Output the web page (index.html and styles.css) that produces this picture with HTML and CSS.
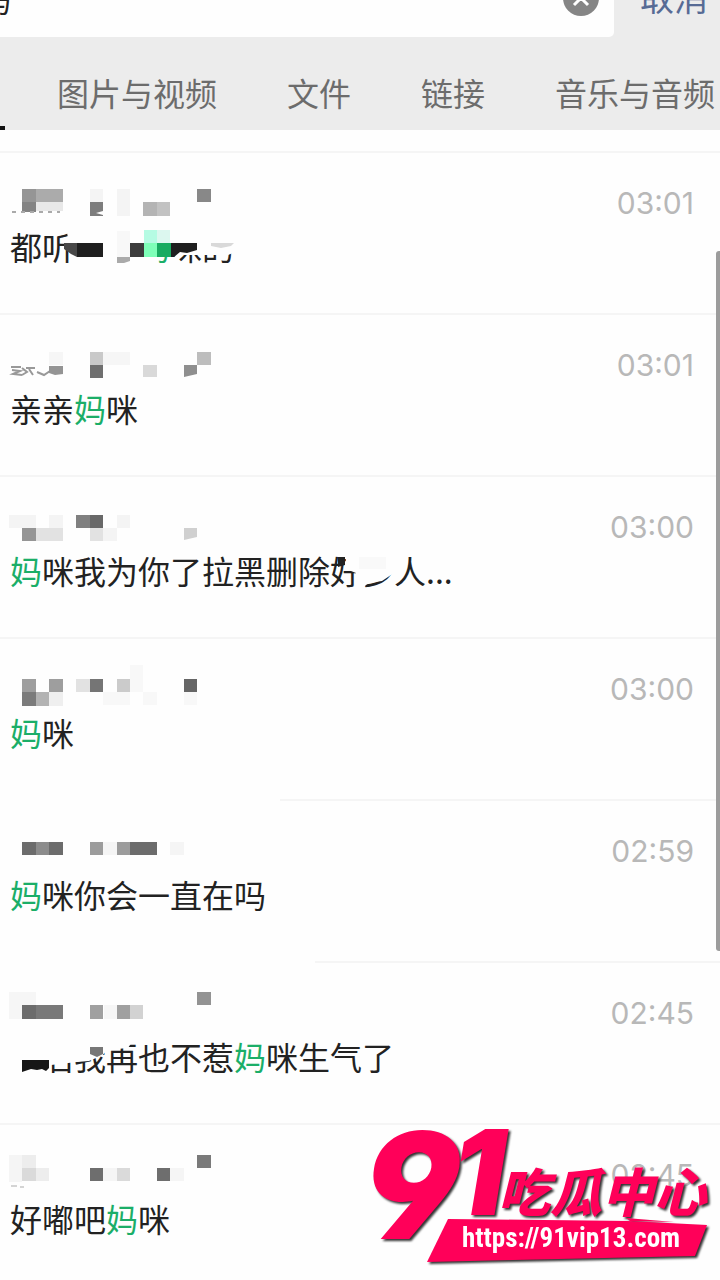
FILE: index.html
```html
<!DOCTYPE html>
<html lang="zh-CN">
  <head>
    <meta charset="utf-8" />
    <title>搜索聊天记录</title>
    <meta name="viewport" content="width=device-width, initial-scale=1" />
    <link rel="stylesheet" href="styles.css">
  </head>
  <body>
    <header class="header">
      <form class="search">
        <div class="search-box">
          <input class="search-input" type="text" value="妈" aria-label="搜索" />
          <button class="clear" type="reset" aria-label="清除">
            <svg width="36" height="36" viewBox="0 0 36 36">
              <circle cx="18" cy="18" r="18" fill="#858585" />
              <path d="M11 11l14 14M25 11L11 25" stroke="#fff" stroke-width="3" />
            </svg>
          </button>
        </div>
        <button class="cancel" type="button">取消</button>
      </form>
      <nav class="tabs">
        <a class="tab" href="#">图片与视频</a>
        <a class="tab" href="#">文件</a>
        <a class="tab" href="#">链接</a>
        <a class="tab" href="#">音乐与音频</a>
      </nav>
    </header>

    <main class="results">
      <ul class="list">
        <li class="item">
          <time class="time">03:01</time>
          <p class="message">都听<span class="hidden-text"></span><mark>妈</mark>咪的</p>
          <svg class="mosaic" width="480" height="130">
            <path fill="#fefefe" d="M66 76h172v24l-10 4h-28l-8 0h-26l-6-1h-8v10h-70v-15h-12z" />
            <path fill="#959595" d="M22 38h14v13h-14z" />
            <path fill="#ababab" d="M36 38h27v13h-27z" />
            <path fill="#838383" d="M22 51h14v10h-14z" />
            <path fill="#e8e8e8" d="M36 51h27v9h-27z" />
            <path fill="none" stroke="#aaa" stroke-width="2" stroke-dasharray="4 5" d="M12 61h48" />
            <path fill="#f4f4f4" d="M90 38h13v13h-13zM117 38h13v27h-13z" />
            <path fill="#7d7d7d" d="M90 51h13v9l-7 2 7 2v1h-13z" />
            <path fill="#b4b4b4" d="M143 51h14v14h-14z" />
            <path fill="#c2c2c2" d="M157 51h13v14h-13z" />
            <path fill="#888" d="M197 38h14v13h-14z" />
            <path fill="#484848" d="M64 92h13v14l-6-3-7-5z" />
            <path fill="#1f1f1f" d="M77 92h26v14h-26zM170 92h27v7l-10 3-7-1-6 5h-4z" />
            <path fill="#f8f8f8" d="M117 80h13v26h-13z" />
            <path fill="#aaa" d="M117 106h13v4l-6 2h-7z" />
            <path fill="#3c3c3c" d="M130 92h14v14h-14z" />
            <path fill="#b5fbe3" d="M144 79h13v13h-13z" />
            <path fill="#dcf7ef" d="M157 79h13v13h-13z" />
            <path fill="#7effb8" d="M144 92h13v14h-13z" />
            <path fill="#17ab60" d="M157 92h14v14h-14z" />
            <path fill="#d9d9d9" d="M211 92h23l-3 3-10 2-10-2z" />
          </svg>
        </li>
        <li class="item">
          <time class="time">03:01</time>
          <p class="message">亲亲<mark>妈</mark>咪</p>
          <svg class="mosaic" width="480" height="130">
            <path fill="none" stroke="#999" stroke-width="2" d="M11 54h10M12 57l8 1-7 3 9 1M22 55l5 4-5 3M26 55h9M29 56l4 6M37 59l7 3 6-4" />
            <path fill="#f6f6f6" d="M49 39h14v13h-14zM103 39h27v13h-27z" />
            <path fill="#949494" d="M49 53h14v8l-8 1-6-2z" />
            <path fill="#c9c9c9" d="M90 39h13v13h-13z" />
            <path fill="#6f6f6f" d="M90 52h13v13h-13z" />
            <path fill="#d9d9d9" d="M143 52h14v12h-14z" />
            <path fill="#8f8f8f" d="M184 52h13v9l-13 3z" />
            <path fill="#bdbdbd" d="M197 39h14v13h-14z" />
          </svg>
        </li>
        <li class="item">
          <time class="time">03:00</time>
          <p class="message"><mark>妈</mark>咪我为你了拉黑删除好多人...</p>
          <svg class="mosaic" width="480" height="130">
            <path fill="#fefefe" d="M346 78h48v20l-12 8-14 2-4 4h-9l1-14-10-4z" />
            <path fill="#222" d="M338 82h7v8l-7 2z" />
            <path fill="#f4f4f4" d="M9 40h27v13h-27zM49 40h14v13h-14zM103 53h14v13h-14zM117 40h13v13h-13z" />
            <path fill="#f9f9f9" d="M359 82h27v12h-27z" />
            <path fill="#959595" d="M22 53h14v13h-14z" />
            <path fill="#e2e2e2" d="M36 53h27v13h-27zM90 53h13v13h-13z" />
            <path fill="#808080" d="M76 40h14v13h-14z" />
            <path fill="#686868" d="M90 40h13v13h-13z" />
            <path fill="#d0d0d0" d="M184 53h13v9l-13 3z" />
          </svg>
        </li>
        <li class="item">
          <time class="time">03:00</time>
          <p class="message"><mark>妈</mark>咪</p>
          <svg class="mosaic" width="480" height="130">
            <path fill="#9e9e9e" d="M22 42h14v13h-14zM49 42h14v13h-14z" />
            <path fill="#7b7b7b" d="M22 55h14v14h-14z" />
            <path fill="#b3b3b3" d="M36 55h13v14h-13z" />
            <path fill="#efefef" d="M49 55h14v14h-14z" />
            <path fill="#e2e2e2" d="M76 42h14v13h-14z" />
            <path fill="#757575" d="M90 42h13v13h-13z" />
            <path fill="#cbcbcb" d="M117 42h13v13h-13z" />
            <path fill="#f8f8f8" d="M130 28h13v27h-13zM103 55h27v13h-27zM143 55h14v13h-14zM184 55h13v13h-13z" />
            <path fill="#666" d="M184 42h13v13h-13z" />
          </svg>
        </li>
        <li class="item">
          <time class="time">02:59</time>
          <p class="message"><mark>妈</mark>咪你会一直在吗</p>
          <svg class="mosaic" width="480" height="130">
            <path fill="#fefefe" d="M0 0h280v2h-280z" />
            <path fill="#6c6c6c" d="M22 43h14v13h-14zM49 43h14v13h-14zM130 43h27v13h-27z" />
            <path fill="#8c8c8c" d="M36 43h13v13h-13z" />
            <path fill="#9c9c9c" d="M90 43h13v13h-13zM117 43h13v13h-13z" />
            <path fill="#f5f5f5" d="M103 43h14v13h-14zM170 43h14v13h-14z" />
          </svg>
        </li>
        <li class="item">
          <time class="time">02:45</time>
          <p class="message">以后我再也不惹<mark>妈</mark>咪生气了</p>
          <svg class="mosaic" width="480" height="130">
            <path fill="#fefefe" d="M0 0h315v2h-315zM6 78h128l-6 9-22 2-3 5-14 6-12 1-26 3v10h-45z" />
            <path fill="#f6f6f6" d="M9 31h27v13h-27zM9 44h13v14h-13zM104 44h13v14h-13z" />
            <path fill="#6c6c6c" d="M22 44h14v14h-14z" />
            <path fill="#797979" d="M36 44h27v14h-27z" />
            <path fill="#a0a0a0" d="M90 44h13v14h-13zM117 44h13v14h-13z" />
            <path fill="#d2d2d2" d="M130 44h13v14h-13z" />
            <path fill="#939393" d="M197 31h14v13h-14z" />
            <path fill="#777" d="M90 86h13v7l-6 3-7-3z" />
            <path fill="#161616" d="M22 99h27v8l-3 3-4-2-5 1-6-1-9 3z" />
          </svg>
        </li>
        <li class="item">
          <time class="time">02:45</time>
          <p class="message">好嘟吧<mark>妈</mark>咪</p>
          <svg class="mosaic" width="480" height="130">
            <path fill="#f5f5f5" d="M9 32h13v27h-13zM103 45h14v13h-14zM170 45h14v13h-14z" />
            <path fill="#ededed" d="M22 32h14v13h-14zM36 45h13v13h-13z" />
            <path fill="#dadada" d="M22 45h14v13h-14zM117 45h13v13h-13z" />
            <path fill="#6e6e6e" d="M90 45h13v13h-13zM157 45h13v13h-13z" />
            <path fill="#7a7a7a" d="M197 32h14v13h-14z" />
            <path fill="none" stroke="#aaa" stroke-width="1" d="M11 63h6M20 64h4" />
          </svg>
        </li>
      </ul>
      <div class="scrollbar"></div>
    </main>

    <svg class="watermark" width="360" height="170" viewBox="0 0 360 170">
      <g fill="#ff0059">
        <text class="wm-nine" x="4" y="129">9</text>
        <text class="wm-one" x="92" y="105">1</text>
        <text class="wm-name" x="138" y="102">吃瓜中心</text>
        <path d="M88 109L268 111 347 115 335 146 67 152z" />
        <path d="M266 108l48 4-44-1z" />
      </g>
      <text class="wm-url" x="102" y="137">https://91vip13.com</text>
    </svg>
  </body>
</html>
```
FILE: styles.css
```css
* {
  box-sizing: border-box;
}

body {
  position: relative;
  height: 100vh;
  margin: 0;
  overflow: hidden;
  background-color: #fefefe;
  color: #222;
  font-family: "Noto Sans CJK SC", sans-serif;
}

button {
  padding: 0;
  border: 0;
  background: none;
  font-family: inherit;
}

/* the header is scrolled partly out of view */
.header {
  margin-top: -36px;
  background-color: #ececec;
}

.search {
  display: flex;
  align-items: center;
}

.search-box {
  display: flex;
  flex: 1;
  align-items: center;
  height: 73px;
  padding: 0 15px 6px 0;
  background-color: #fefefe;
  border-radius: 0 5px 5px 0;
}

.search-input {
  flex: 1;
  min-width: 0;
  padding: 0;
  border: 0;
  outline: none;
  background: none;
  color: #222;
  font-family: inherit;
  font-size: 32px;
  text-indent: -21px;
}

.clear {
  display: flex;
}

.cancel {
  width: 106px;
  padding: 0 0 8px 14px;
  color: #576b95;
  font-size: 34px;
  line-height: 48px;
}

.tabs {
  position: relative;
  display: flex;
  gap: 70px;
  height: 93px;
  padding: 31px 0 0 57px;
}

/* end of the active tab's underline */
.tabs::before {
  content: "";
  position: absolute;
  left: 0;
  bottom: 0;
  width: 5px;
  height: 4px;
  background-color: #111;
}

.tab {
  flex: none;
  color: #6c6c6c;
  font-size: 32px;
  line-height: 48px;
  text-decoration: none;
}

.results {
  position: relative;
  padding-top: 21px;
}

.list {
  margin: 0;
  padding: 0;
  list-style: none;
}

.item {
  position: relative;
  height: 162px;
  padding: 30px 26px 0 10px;
  border-top: 2px solid #f5f5f5;
}

.time {
  display: block;
  color: #b8b8b8;
  font-family: Inter, sans-serif;
  font-size: 30px;
  line-height: 40px;
  text-align: right;
}

.message {
  margin: 0;
  font-size: 32px;
  line-height: 46px;
}

.message mark {
  background: none;
  color: #1bae68;
}

.hidden-text {
  display: inline-block;
  width: 64px;
}

.mosaic {
  position: absolute;
  top: -2px;
  left: 0;
}

.scrollbar {
  position: absolute;
  top: 121px;
  right: 0;
  width: 4px;
  height: 700px;
  background-color: #9c9c9c;
  border-radius: 3px 0 0 3px;
}

.watermark {
  position: absolute;
  right: 0;
  bottom: 0;
  filter: drop-shadow(2px 2px 1px #333);
}

.wm-nine,
.wm-one {
  font-family: Inter, sans-serif;
  font-style: italic;
  font-weight: 900;
  font-feature-settings: "ss01";
}

.wm-nine {
  font-size: 148px;
}

.wm-one {
  font-size: 118px;
}

.wm-name {
  font-size: 52px;
  font-style: italic;
  font-weight: 900;
}

.wm-url {
  fill: #fff;
  font-family: "Liberation Sans Narrow", "Roboto Condensed", Roboto, sans-serif;
  font-size: 27px;
  font-weight: 700;
}
```
